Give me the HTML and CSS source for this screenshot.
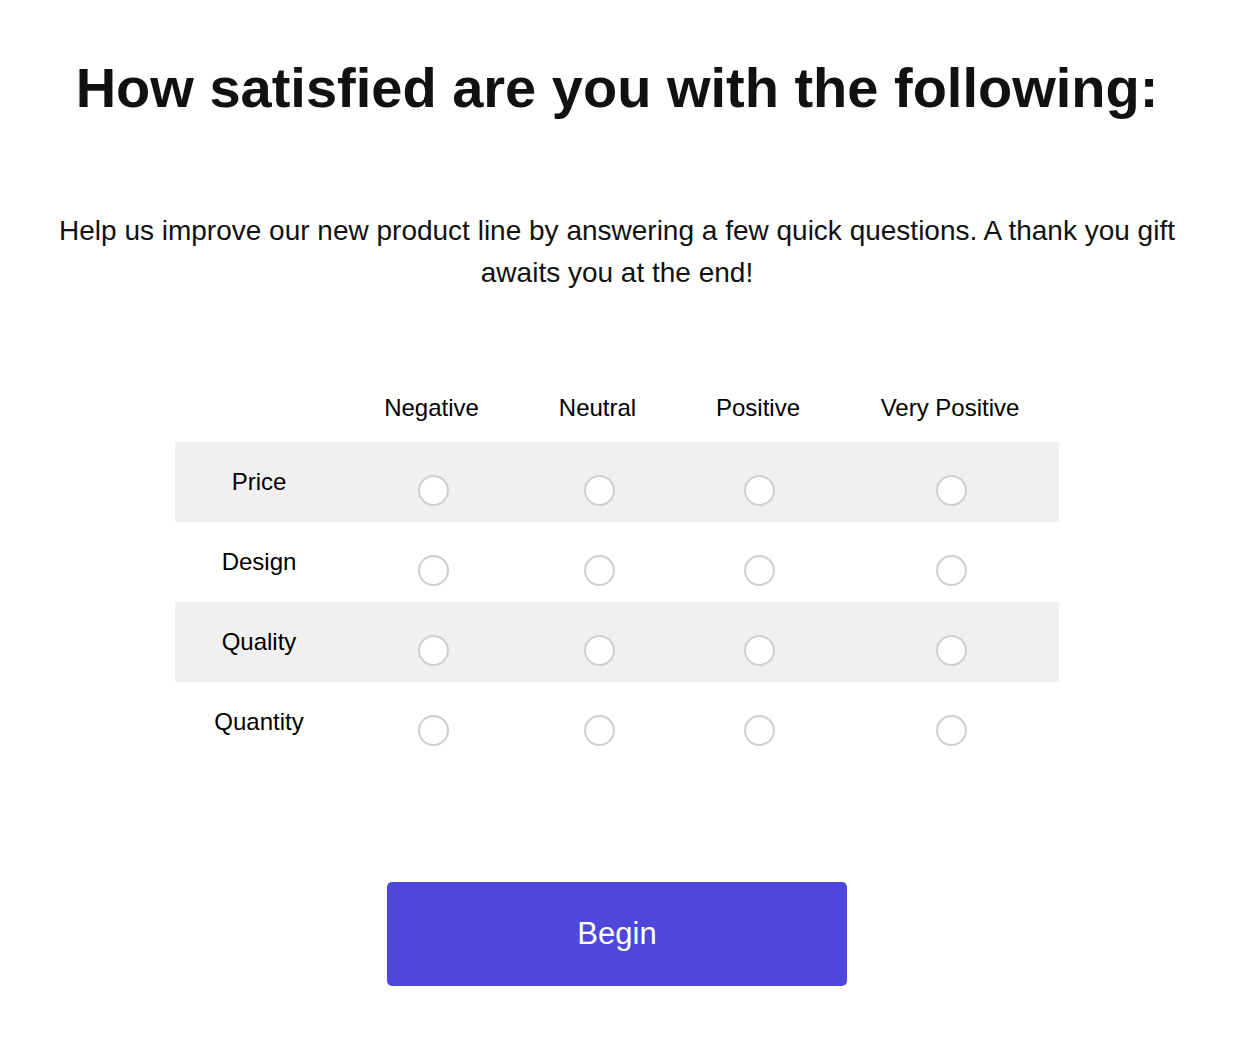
FILE: index.html
```html
<!DOCTYPE html>
<html lang="en">
<head>
  <meta charset="UTF-8" />
  <meta name="viewport" content="width=device-width,initial-scale=1" />
  <title>Satisfaction Survey</title>
  <link rel="stylesheet" href="styles.css">
</head>
<body>

  <div class="page">
    <h1>How satisfied are you with the following:</h1>
    <p class="intro">Help us improve our new product line by answering a few quick questions. A thank you gift awaits you at the end!</p>

    <!-- RATING MATRIX -->
    <table class="matrix">
      <colgroup>
        <col class="c-label">
        <col class="c-neg">
        <col class="c-neu">
        <col class="c-pos">
        <col class="c-vpos">
      </colgroup>
      <thead>
        <tr>
          <th></th>
          <th>Negative</th>
          <th>Neutral</th>
          <th>Positive</th>
          <th>Very Positive</th>
        </tr>
      </thead>
      <tbody>
        <tr class="shade">
          <td class="label">Price</td>
          <td><input type="radio" name="price"></td>
          <td><input type="radio" name="price"></td>
          <td><input type="radio" name="price"></td>
          <td><input type="radio" name="price"></td>
        </tr>
        <tr>
          <td class="label">Design</td>
          <td><input type="radio" name="design"></td>
          <td><input type="radio" name="design"></td>
          <td><input type="radio" name="design"></td>
          <td><input type="radio" name="design"></td>
        </tr>
        <tr class="shade">
          <td class="label">Quality</td>
          <td><input type="radio" name="quality"></td>
          <td><input type="radio" name="quality"></td>
          <td><input type="radio" name="quality"></td>
          <td><input type="radio" name="quality"></td>
        </tr>
        <tr>
          <td class="label">Quantity</td>
          <td><input type="radio" name="quantity"></td>
          <td><input type="radio" name="quantity"></td>
          <td><input type="radio" name="quantity"></td>
          <td><input type="radio" name="quantity"></td>
        </tr>
      </tbody>
    </table>

    <button class="begin-btn">Begin</button>
  </div>

</body>
</html>
```

FILE: styles.css
```css
body { margin: 0; font-family: "Liberation Sans", Arial, Helvetica, sans-serif; color: #111; background: #fff; }
.page { display: flex; flex-direction: column; align-items: center; padding: 56px 40px 0; }

h1 { margin: 0; font-size: 56px; line-height: 64px; font-weight: bold; text-align: center; color: #111; }
.intro { margin: 90px 0 0; font-size: 28px; line-height: 42px; text-align: center; color: #111; }

.matrix { margin-top: 100px; width: 884px; border-collapse: collapse; table-layout: fixed; font-size: 24px; color: #000; }
.matrix .c-label { width: 168px; }
.matrix .c-neg { width: 177px; }
.matrix .c-neu { width: 155px; }
.matrix .c-pos { width: 166px; }
.matrix .c-vpos { width: 218px; }
.matrix th { font-weight: normal; line-height: 28px; padding: 0 0 20px; text-align: center; }
.matrix td { height: 80px; padding: 0 0 0 3px; text-align: center; vertical-align: middle; line-height: 28px; }
.matrix td.label { padding: 0; }
.matrix tr.shade td { background: #f0f0f0; }

.matrix input[type="radio"] {
  appearance: none; -webkit-appearance: none;
  display: block; margin: 16px auto 0;
  width: 31px; height: 31px; box-sizing: border-box;
  border: 2px solid #cfcfcf; border-radius: 50%; background: #fff;
}

.begin-btn {
  margin-top: 120px; width: 460px; height: 104px;
  border: none; border-radius: 5px; background: #4f47d9; color: #fff;
  font-family: inherit; font-size: 31px; cursor: pointer;
}
```
